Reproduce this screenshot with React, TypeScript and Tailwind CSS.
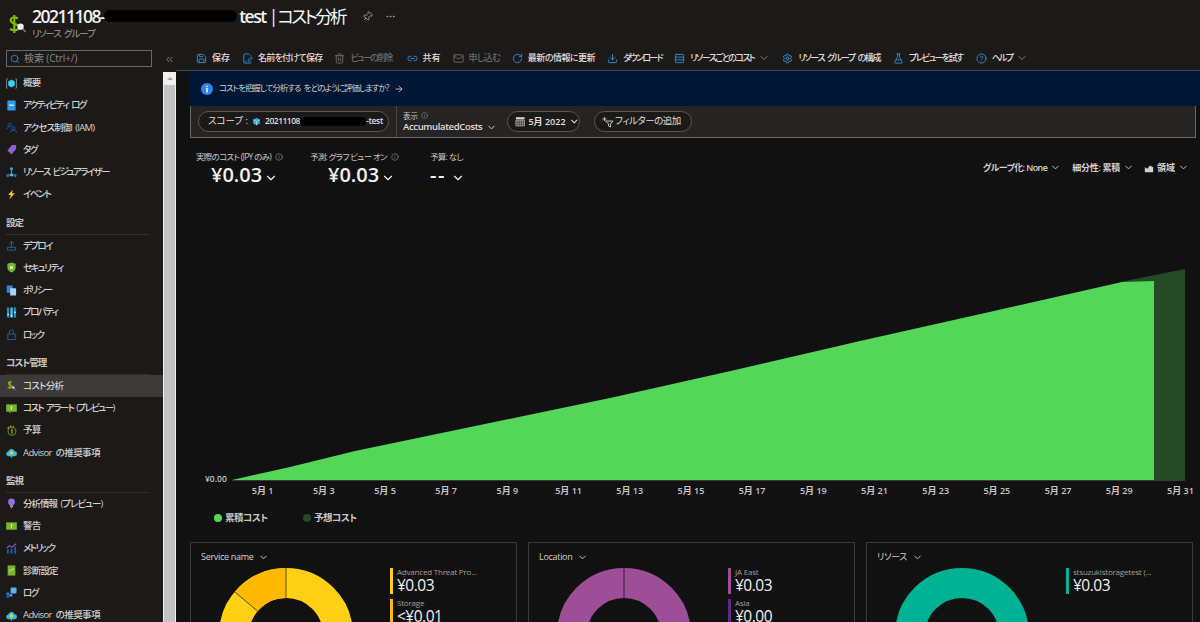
import { ReactNode } from "react"
import {
  ArrowRight,
  ChevronDown,
  ChevronsLeft,
  CircleHelp,
  Download,
  Ellipsis,
  FilePenLine,
  FlaskConical,
  Info,
  Link2,
  Mail,
  Pin,
  RotateCw,
  Rows3,
  Save,
  Search,
  Settings,
  Trash2,
} from "lucide-react"

// small coloured icons of the blade menu
const Ico = ({ children }: { children: ReactNode }) => (
  <svg viewBox="0 0 12 12" className="w-[11px] h-[11px] shrink-0">
    {children}
  </svg>
)

const icons: Record<string, ReactNode> = {
  overview: (
    <Ico>
      <path d="M2 1H.6v10H2M10 1h1.4v10H10" fill="none" stroke="#8a8886" />
      <path d="M6 1.6l3.6 2.2v4.4L6 10.4 2.4 8.2V3.8z" fill="#32d4f5" />
    </Ico>
  ),
  activity: (
    <Ico>
      <rect x="1.5" y=".5" width="9" height="11" rx="1" fill="#2f9be8" />
      <rect x="3.5" y="5" width="5" height="1.2" fill="#fff" />
    </Ico>
  ),
  iam: (
    <Ico>
      <circle cx="4" cy="3" r="1.8" fill="none" stroke="#1d5fb0" />
      <circle cx="8" cy="7" r="1.8" fill="none" stroke="#1d5fb0" />
      <path d="M1 8c0-2 1-2.8 3-2.8M4.5 11.5c0-1.800 1.500-2.500 3.500-2.500s3.500.7 3.500 2.500" fill="none" stroke="#1d5fb0" />
    </Ico>
  ),
  tag: (
    <Ico>
      <path d="M1.500 7l5-6H11v4.500l-5 6z" fill="#8b62d8" />
    </Ico>
  ),
  visual: (
    <Ico>
      <path d="M6 2.500V7M2 9.500L6 7l4 2.500" fill="none" stroke="#5ea0ef" />
      <circle cx="6" cy="2" r="1.800" fill="#3b9ae8" />
      <circle cx="2" cy="9.500" r="1.600" fill="#1d78d0" />
      <circle cx="10" cy="9.500" r="1.600" fill="#1d78d0" />
      <circle cx="6" cy="9" r="1.400" fill="#7fd0a0" />
    </Ico>
  ),
  event: (
    <Ico>
      <path d="M7.500.5L2.500 6.500h2.800L3.500 11.500l6-7H6.500z" fill="#fcd116" />
    </Ico>
  ),
  deploy: (
    <Ico>
      <path d="M6 8V1.500M3.500 4L6 1.500 8.500 4M1.500 8v3h9V8z" fill="none" stroke="#1d67c0" />
    </Ico>
  ),
  security: (
    <Ico>
      <path d="M6 .5l4.500 1.500v4c0 3-2.500 4.500-4.500 5.500C4 10.500 1.500 9 1.500 6V2z" fill="#76b82a" />
      <rect x="4.300" y="4.800" width="3.400" height="2.700" fill="#e8f5d8" />
    </Ico>
  ),
  policy: (
    <Ico>
      <rect x=".8" y=".5" width="6.500" height="8" rx=".6" fill="#2f86e0" />
      <rect x="4.500" y="3.500" width="6.500" height="8" rx=".6" fill="#a9d4fa" />
    </Ico>
  ),
  props: (
    <Ico>
      <rect x="1" y=".5" width="2.500" height="11" fill="#1c8fd0" />
      <rect x="4.800" y=".5" width="2.500" height="11" fill="#59c2ee" />
      <rect x="8.500" y=".5" width="2.500" height="11" fill="#1c8fd0" />
      <rect x="1.500" y="7.500" width="1.500" height="1.500" fill="#fff" />
      <rect x="5.300" y="9" width="1.500" height="1.500" fill="#fff" />
      <rect x="9" y="5" width="1.500" height="1.500" fill="#fff" />
    </Ico>
  ),
  lock: (
    <Ico>
      <rect x="2" y="5.500" width="8" height="6" fill="none" stroke="#1d5fb0" />
      <path d="M3.800 5.500V3.200a2.200 2.200 0 014.400 0v2.300" fill="none" stroke="#1d5fb0" />
    </Ico>
  ),
  cost: (
    <Ico>
      <path d="M6.500 2.500C5 1.800 2.500 1.800 2.500 3.600S6.500 5.200 6.500 7 3.500 8.700 1.800 8M4.200 .8v9" fill="none" stroke="#7fba00" strokeWidth="1.300" />
      <circle cx="8" cy="8.300" r="1.400" fill="#d2d0ce" />
      <path d="M9 9.400l2 2" stroke="#8a8886" />
    </Ico>
  ),
  alert: (
    <Ico>
      <rect x=".2" y="1.500" width="11.600" height="8" fill="#76b82a" />
      <path d="M3 9.500l2 2v-2z" fill="#76b82a" />
      <rect x="5.300" y="3.500" width="1.400" height="4" fill="#dff2c2" />
    </Ico>
  ),
  budget: (
    <Ico>
      <circle cx="6.500" cy="6.800" r="4.300" fill="none" stroke="#5f8a1c" strokeWidth="1.200" />
      <rect x="5.800" y="4" width="1.400" height="5.500" fill="#7fba00" />
      <circle cx="2.500" cy="3" r="1" fill="#e8701a" />
      <circle cx="5" cy="1.500" r="1" fill="#e8701a" />
      <circle cx="8" cy="1.500" r=".8" fill="#e8701a" />
    </Ico>
  ),
  advisor: (
    <Ico>
      <path d="M3 10a2.500 2.500 0 01-.5-5A3.500 3.500 0 019.300 4.600 2.700 2.700 0 019.300 10z" fill="#32bfe8" />
      <circle cx="6" cy="6.500" r="1.800" fill="#fcd116" />
      <rect x="5.200" y="9.500" width="1.600" height="2" fill="#32bfe8" />
    </Ico>
  ),
  insight: (
    <Ico>
      <circle cx="6" cy="4.300" r="3.700" fill="#9a6ce8" />
      <rect x="4.300" y="8" width="3.400" height="1.600" fill="#b9b3c8" />
      <rect x="5" y="10" width="2" height="1.300" fill="#8a8886" />
    </Ico>
  ),
  warn: (
    <Ico>
      <rect x=".2" y="1.500" width="11.600" height="8" fill="#76b82a" />
      <rect x="5.400" y="3" width="1.200" height="3" fill="#e4f3cc" />
      <rect x="5.400" y="6.800" width="1.200" height="1.200" fill="#e4f3cc" />
    </Ico>
  ),
  metric: (
    <Ico>
      <rect x="1" y="7" width="2" height="4.500" fill="#1d5fb0" />
      <rect x="5" y="6" width="2" height="5.500" fill="#1d5fb0" />
      <rect x="9" y="4" width="2" height="7.500" fill="#1d5fb0" />
      <path d="M.8 5.500l3-2.500 2.700 1.500L11 .8" fill="none" stroke="#9a4fd0" strokeWidth="1.200" />
    </Ico>
  ),
  diag: (
    <Ico>
      <rect x="1.800" y=".5" width="8.400" height="11" fill="#76b82a" />
      <path d="M3.500 7l2-1.500 3-1.500" stroke="#d6eeb4" fill="none" />
    </Ico>
  ),
  logs: (
    <Ico>
      <rect x="5" y=".5" width="6.500" height="6.500" rx="1.200" fill="#59b4f0" />
      <rect x=".5" y="6" width="3" height="2.800" fill="#1d78d0" />
      <rect x=".5" y="9" width="3" height="2.800" fill="#1d5fb0" />
      <rect x="3.800" y="7.500" width="3" height="3" fill="#3b9ae8" />
    </Ico>
  ),
}

const NavRow = ({ icon, label, active, t = "tracking-[-1.600px]" }: { icon: string; label: string; active?: boolean; t?: string }) => (
  <div className={`flex items-center gap-[6px] h-[22.250px] pl-[6px] text-[9.500px] font-medium text-[#d2d0ce] [word-spacing:2px] ${active ? "bg-[#3b3a39]" : ""}`}>
    {icons[icon]}
    <span className={`whitespace-nowrap ${t}`}>{label}</span>
  </div>
)

const NavHeading = ({ label }: { label: string }) => (
  <div className="mt-[11px] ml-[6px] w-[143px] h-[18px] border-b border-[#323130] text-[9.500px] font-bold text-[#c8c6c4] leading-[11px] tracking-[-1px]">
    {label}
  </div>
)

const ToolItem = ({ icon, label, off, chevron, t, ml = "" }: { icon: ReactNode; label: string; off?: boolean; chevron?: boolean; t: string; ml?: string }) => (
  <div className={`flex items-center gap-[5px] whitespace-nowrap font-medium [word-spacing:2px] ${ml} ${off ? "text-[#6e6c6a]" : "text-[#e1dfdd]"}`}>
    {icon}
    <span className={t}>{label}</span>
    {chevron && <ChevronDown className="w-[12px] h-[12px] -ml-[1px] text-[#a19f9d]" strokeWidth={1.5} />}
  </div>
)

const Stat = ({ label, value, width, pad, info = true, t = "" }: { label: string; value: string; width: string; pad: string; info?: boolean; t?: string }) => (
  <div className={width}>
    <div className="flex items-center gap-[4px] h-[12px] mt-[1px] text-[8.500px] text-[#c8c6c4] whitespace-nowrap">
      <span className="tracking-[-0.700px]">{label}</span>
      {info && <Info className="w-[8px] h-[8px] text-[#8a8886]" />}
    </div>
    <div className={`flex items-center gap-[2px] ${pad} -mt-[1px] h-[26px] text-[20px] leading-[24px] font-semibold text-[#f3f2f1]`}>
      <span className={t}>{value}</span>
      <ChevronDown className="w-[14px] h-[14px] mt-[6px]" strokeWidth={2} />
    </div>
  </div>
)

const days = ["1", "3", "5", "7", "9", "11", "13", "15", "17", "19", "21", "23", "25", "27", "29", "31"]

const Donut = ({ color, segments }: { color: string; segments?: ReactNode }) => (
  <svg viewBox="0 0 134 134" className="w-[134px] h-[134px] shrink-0">
    <circle cx="67" cy="67" r="52" fill="none" stroke={color} strokeWidth="30" />
    {segments}
  </svg>
)

const Legend = ({ color, label, value }: { color: string; label: string; value: string }) => (
  <div className="flex gap-[4px] h-[26px] mb-[5px]">
    <div className="w-[3px] h-[26px]" style={{ backgroundColor: color }} />
    <div className="whitespace-nowrap -mt-[1px]">
      <div className="text-[8px] leading-[10px] text-[#a19f9d] tracking-[-0.2px]">{label}</div>
      <div className="text-[15.500px] leading-[17px] text-[#f3f2f1] tracking-[-0.5px]">{value}</div>
    </div>
  </div>
)

const Card = ({ title, donut, children }: { title: string; donut: ReactNode; children: ReactNode }) => (
  <div className="w-[327px] h-[200px] shrink-0 border border-[#3b3a39] pl-[10px] pt-[7px]">
    <div className="flex items-center gap-[5px] h-[14px] text-[9px] text-[#d2d0ce]">
      <span className="tracking-[-0.3px]">{title}</span>
      <ChevronDown className="w-[11px] h-[11px]" strokeWidth={2} />
    </div>
    <div className="flex mt-[4px]">
      <div className="ml-[18px] mr-[37px]">{donut}</div>
      <div>{children}</div>
    </div>
  </div>
)

const Control = ({ children, ml = "" }: { children: ReactNode; ml?: string }) => (
  <div className={`flex items-center gap-[3px] whitespace-nowrap ${ml}`}>
    {children}
    <ChevronDown className="w-[11px] h-[11px]" strokeWidth={2} />
  </div>
)

export default function App() {
  const tb = "w-[11px] h-[11px] text-[#2f8fdc]"
  const tbOff = "w-[11px] h-[11px] text-[#6e6c6a]"
  const kana = "tracking-[-1.700px]"
  const mixed = "tracking-[-0.750px]"

  return (
    <div className="w-[1200px] h-[622px] overflow-hidden flex flex-col bg-[#1b1a19] font-['Open_Sans','Noto_Sans_CJK_JP',sans-serif] [font-feature-settings:'palt']">
      {/* Title */}
      <div className="h-[46px] shrink-0 flex pl-[8px] pt-[5px]">
        <svg viewBox="0 0 20 24" className="w-[18px] h-[22px] mt-[8px] shrink-0">
          <path d="M11 6C8 4 3 4 3 8s9 3.500 9 7.500-6 4-10 2M7 2v20" fill="none" stroke="#7fba00" strokeWidth="2.400" />
          <circle cx="14" cy="15" r="3.500" fill="#f3f2f1" />
          <path d="M16.500 17.500l3.500 3.500" stroke="#8a8886" strokeWidth="1.500" />
        </svg>
        <div className="ml-[6px]">
          <div className="flex items-center h-[22px] text-[17.500px] font-semibold text-[#f3f2f1] whitespace-nowrap tracking-[-1.500px]">
            20211108-
            <span className="inline-block w-[133px] h-[12px] bg-black rounded-full" />
            <span className="ml-[2px]">test</span>
            <span className="ml-[3px] font-normal tracking-[-2.700px]">| コスト分析</span>
            <Pin className="w-[11px] h-[11px] ml-[17px] text-[#a19f9d] rotate-45" />
            <Ellipsis className="w-[11px] h-[11px] ml-[12px] text-[#a19f9d]" />
          </div>
          <div className="text-[9.500px] leading-[12px] mt-[1px] text-[#a19f9d] tracking-[-1.100px] [word-spacing:2px]">リソース グループ</div>
        </div>
      </div>

      <div className="flex flex-1 min-h-0">
        {/* Blade menu */}
        <div className="w-[163px] shrink-0 overflow-hidden">
          <div className="mt-[4px] mx-[6px] w-[146px] h-[17px] border border-[#6b6967] flex items-center gap-[4px] pl-[3px] text-[10px] text-[#8a8886]">
            <Search className="w-[10px] h-[10px] text-[#2f8fdc]" />
            <span className="tracking-[-0.1px]">検索 (Ctrl+/)</span>
          </div>
          <div className="mt-[5px]">
            <NavRow icon="overview" label="概要" t="tracking-[-0.800px]" />
            <NavRow icon="activity" label="アクティビティ ログ" />
            <NavRow icon="iam" label="アクセス制御 (IAM)" t="tracking-[-0.800px]" />
            <NavRow icon="tag" label="タグ" />
            <NavRow icon="visual" label="リソース ビジュアライザー" />
            <NavRow icon="event" label="イベント" />
            <NavHeading label="設定" />
            <NavRow icon="deploy" label="デプロイ" />
            <NavRow icon="security" label="セキュリティ" />
            <NavRow icon="policy" label="ポリシー" />
            <NavRow icon="props" label="プロパティ" />
            <NavRow icon="lock" label="ロック" />
            <NavHeading label="コスト管理" />
            <NavRow icon="cost" label="コスト分析" active t="tracking-[-0.700px]" />
            <NavRow icon="alert" label="コスト アラート (プレビュー)" />
            <NavRow icon="budget" label="予算" t="tracking-[-0.800px]" />
            <NavRow icon="advisor" label="Advisor の推奨事項" t="tracking-[-0.600px]" />
            <NavHeading label="監視" />
            <NavRow icon="insight" label="分析情報 (プレビュー)" t="tracking-[-1px]" />
            <NavRow icon="warn" label="警告" t="tracking-[-0.800px]" />
            <NavRow icon="metric" label="メトリック" />
            <NavRow icon="diag" label="診断設定" t="tracking-[-0.800px]" />
            <NavRow icon="logs" label="ログ" />
            <NavRow icon="advisor" label="Advisor の推奨事項" t="tracking-[-0.600px]" />
          </div>
        </div>

        {/* Collapse button and scrollbar */}
        <div className="w-[13px] shrink-0 flex flex-col">
          <div className="h-[26px] flex items-center justify-center">
            <ChevronsLeft className="w-[11px] h-[11px] text-[#8a8886] mt-[1px]" />
          </div>
          <div className="flex-1 bg-[#f0f0f0] px-[1px]">
            <div className="h-[13px] flex items-center justify-center">
              <div className="w-0 h-0 border-x-[3px] border-x-transparent border-b-[3px] border-b-[#a6a6a6]" />
            </div>
            <div className="h-full bg-[#c2c2c2]" />
          </div>
        </div>

        {/* Main */}
        <div className="w-[1024px] shrink-0 overflow-hidden bg-[#111111]">
          <div className="h-[25px] bg-[#1b1a19] border-b border-[#4a4947] flex items-center gap-[12px] pl-[20px] text-[9px]">
            <ToolItem icon={<Save className={tb} />} label="保存" t="tracking-normal" />
            <ToolItem icon={<FilePenLine className={tb} />} label="名前を付けて保存" t={mixed} />
            <ToolItem icon={<Trash2 className={tbOff} />} label="ビューの削除" off t={kana} />
            <ToolItem icon={<Link2 className={tb} />} label="共有" t="tracking-normal" ml="ml-[3px]" />
            <ToolItem icon={<Mail className={tbOff} />} label="申し込む" off t={mixed} />
            <ToolItem icon={<RotateCw className={tb} />} label="最新の情報に更新" t="tracking-[-0.500px]" />
            <ToolItem icon={<Download className={tb} />} label="ダウンロード" t={kana} />
            <ToolItem icon={<Rows3 className={tb} />} label="リソースごとのコスト" chevron t="tracking-[-1.500px]" />
            <ToolItem icon={<Settings className={tb} />} label="リソース グループ の構成" t="tracking-[-1.400px]" />
            <ToolItem icon={<FlaskConical className={tb} />} label="プレビューを試す" t="tracking-[-1.600px]" ml="ml-[1px]" />
            <ToolItem icon={<CircleHelp className={tb} />} label="ヘルプ" chevron t={kana} ml="ml-[1px]" />
          </div>

          <div className="ml-[14px]">
            <div className="h-[35px] bg-[#001635] flex items-center pl-[11px] text-[8.500px] text-[#d2d0ce]">
              <svg viewBox="0 0 12 12" className="w-[12px] h-[12px] mr-[6px]">
                <circle cx="6" cy="6" r="6" fill="#2f86ec" />
                <rect x="5.300" y="5" width="1.400" height="4.500" fill="#fff" />
                <rect x="5.300" y="2.800" width="1.400" height="1.400" fill="#fff" />
              </svg>
              <span className="tracking-[-1.050px] [word-spacing:2px]">コストを把握して分析する をどのように評価しますか?</span>
              <ArrowRight className="w-[10px] h-[10px] ml-[6px]" />
            </div>

            <div className="w-[1006px] h-[32px] bg-[#252423] border-x border-b border-[#6b6967] flex items-center pl-[7px] text-[9.500px] text-[#e1dfdd]">
              <div className="w-[191px] h-[21px] bg-[#1b1a19] border border-[#5a5856] rounded-full flex items-center pl-[9px] whitespace-nowrap">
                スコープ :
                <svg viewBox="0 0 12 12" className="w-[9px] h-[9px] mx-[4px]">
                  <path d="M6 1l4.500 2.500v5L6 11 1.500 8.500v-5z" fill="#32a8d8" />
                  <path d="M1.500 3.500L6 6l4.500-2.500M6 6v5" stroke="#d2f0fa" fill="none" strokeWidth=".8" />
                </svg>
                <span className="text-[8.500px] font-semibold tracking-[-0.500px]">20211108</span>
                <span className="inline-block w-[66px] h-[9px] bg-black rounded-full" />
                <span className="text-[8.500px] font-semibold tracking-[-0.300px]">-test</span>
              </div>
              <div className="w-px h-[31px] bg-[#4a4947] ml-[7px] mr-[6px]" />
              <div className="w-[104px] leading-[10px]">
                <div className="flex items-center gap-[3px] text-[7.500px] text-[#c8c6c4]">
                  表示
                  <Info className="w-[7px] h-[7px] text-[#8a8886]" />
                </div>
                <div className="flex items-center gap-[4px] mt-[1px] text-[9.500px] font-semibold whitespace-nowrap">
                  <span className="tracking-[-0.350px]">AccumulatedCosts</span>
                  <ChevronDown className="w-[11px] h-[11px]" />
                </div>
              </div>
              <div className="w-[73px] h-[21px] bg-[#1b1a19] border border-[#5a5856] rounded-full flex items-center gap-[3px] pl-[7px] text-[9px] font-semibold whitespace-nowrap">
                <svg viewBox="0 0 12 12" className="w-[11px] h-[11px]">
                  <rect x="1" y="1" width="10" height="2.500" fill="#d2d0ce" />
                  <path d="M1 4.500h10v6.500H1z" fill="none" stroke="#d2d0ce" strokeWidth=".8" />
                  <path d="M1 6.500h10M1 8.700h10M3.500 4.500v6.500M6 4.500v6.500M8.500 4.500v6.500" stroke="#d2d0ce" strokeWidth=".6" />
                </svg>
                5月 2022
                <ChevronDown className="w-[11px] h-[11px]" strokeWidth={2.500} />
              </div>
              <div className="w-[98px] h-[21px] ml-[14px] bg-[#1b1a19] border border-[#5a5856] rounded-full flex items-center gap-[1px] pl-[7px] whitespace-nowrap">
                <svg viewBox="0 0 12 12" className="w-[12px] h-[12px]">
                  <path d="M2.500 1v4M.5 3h4M3.500 5h7.500L8.500 8v3l-2-1V8z" fill="none" stroke="#d2d0ce" strokeWidth=".9" />
                </svg>
                <span className="tracking-[-0.500px]">フィルターの追加</span>
              </div>
            </div>

            {/* KPIs and chart options */}
            <div className="h-[50px] flex pl-[6px] pt-[12px]">
              <Stat label="実際のコスト (JPY のみ)" value="¥0.03" width="w-[114px]" pad="pl-[15px]" />
              <Stat label="予測: グラフ ビュー オン" value="¥0.03" width="w-[120px]" pad="pl-[18px]" />
              <Stat label="予算: なし" value="--" width="w-[60px]" pad="pl-0" info={false} t="tracking-[1.500px] mr-[3px]" />
              <div className="ml-auto mr-[11px] flex items-start pt-[11px] text-[9px] text-[#d2d0ce] font-semibold">
                <Control><span className="tracking-[-0.600px]">グループ化: None</span></Control>
                <Control ml="ml-[11px]"><span className="tracking-[-0.300px]">細分性: 累積</span></Control>
                <Control ml="ml-[10px]">
                  <svg viewBox="0 0 12 12" className="w-[10px] h-[10px]">
                    <path d="M1 11V5l3 2 3-4 4 2v6z" fill="#d2d0ce" />
                  </svg>
                  領域
                </Control>
              </div>
            </div>
          </div>

          {/* Area chart */}
          <svg viewBox="176 188 1024 296" className="w-[1024px] h-[296px] block">
            <path d="M1120 282L1185 269V480H1120Z" fill="#264a26" />
            <path d="M232 480L290 467 355 451 480 425 610 398 735 370 860 341 985 313 1122 282 1154 281V480Z" fill="#54d658" />
            <path d="M232 480.500H1185" stroke="#3b3a39" />
            <text x="205" y="482" fontSize="8.500" fontWeight="600" fill="#c8c6c4" fontFamily="Open Sans">¥0.00</text>
          </svg>
          <div className="flex pl-[56px] h-[14px] text-[9px] font-semibold text-[#c8c6c4]">
            {days.map((d) => (
              <div key={d} className="w-[61.200px] shrink-0 text-center whitespace-nowrap">5月 {d}</div>
            ))}
          </div>

          <div className="flex items-center pl-[38px] mt-[13px] h-[14px] text-[9.500px] text-[#c8c6c4] font-semibold">
            <div className="w-[8px] h-[8px] rounded-full bg-[#54d658] mr-[3px]" />
            <div className="w-[78px] tracking-[-0.500px]">累積コスト</div>
            <div className="w-[8px] h-[8px] rounded-full bg-[#264a26] mr-[3px]" />
            <div className="tracking-[-0.500px]">予想コスト</div>
          </div>

          <div className="flex gap-[11px] pl-[14px] mt-[17px]">
            <Card
              title="Service name"
              donut={
                <Donut
                  color="#ffd014"
                  segments={
                    <>
                      <path d="M67 0A67 67 0 0 0 15.700 23.900L38.700 43.200A37 37 0 0 1 67 30Z" fill="#ffb900" />
                      <path d="M67 0V30M15.700 23.900L38.700 43.200" stroke="#5c4a10" strokeWidth="1" />
                    </>
                  }
                />
              }
            >
              <Legend color="#ffd014" label="Advanced Threat Pro..." value="¥0.03" />
              <Legend color="#ffb900" label="Storage" value="<¥0.01" />
            </Card>
            <Card
              title="Location"
              donut={<Donut color="#9c4f96" segments={<path d="M67 0V30" stroke="#3a2038" strokeWidth="1" />} />}
            >
              <Legend color="#9c4f96" label="JA East" value="¥0.03" />
              <Legend color="#5c2d84" label="Asia" value="¥0.00" />
            </Card>
            <Card title="リソース" donut={<Donut color="#00b294" />}>
              <Legend color="#00b294" label="stsuzukistoragetest (..." value="¥0.03" />
            </Card>
          </div>
        </div>
      </div>
    </div>
  )
}
